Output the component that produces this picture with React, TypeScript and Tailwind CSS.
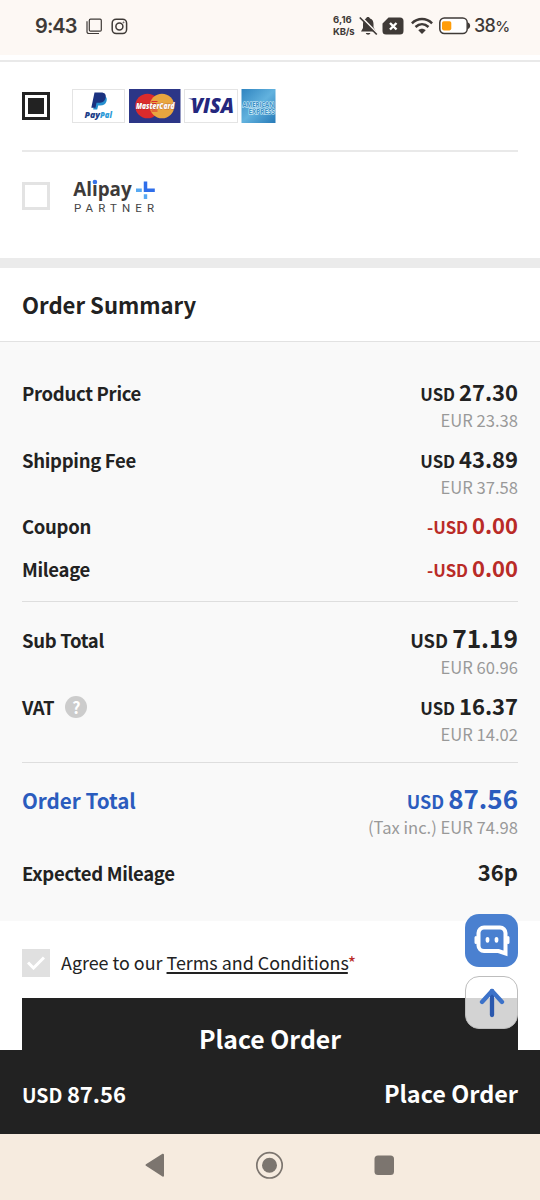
import type { ReactNode } from "react"

type AmountProps = {
  value: string
  sign?: string
  className?: string
  valueClassName?: string
}

type SummaryRowProps = {
  label: ReactNode
  className: string
  labelClassName?: string
  note?: string
  children: ReactNode
}

const Amount = ({
  value,
  sign = "",
  className = "text-[16.8px]",
  valueClassName = "text-[22px]",
}: AmountProps) => (
  <span className={`font-bold ${className}`}>
    {sign}USD <span className={valueClassName}>{value}</span>
  </span>
)

const SummaryRow = ({
  label,
  className,
  labelClassName = "text-[18.5px] tracking-[-0.3px]",
  note,
  children,
}: SummaryRowProps) => (
  <div className={className}>
    <div className="flex h-[30px] items-baseline justify-between whitespace-nowrap leading-[30px]">
      <div className={`font-bold ${labelClassName}`}>{label}</div>
      {children}
    </div>
    {note && (
      <p className="text-right text-[16.6px] leading-[28px] text-[#999]">{note}</p>
    )}
  </div>
)

const StatusBar = () => (
  <header className="flex h-[55px] shrink-0 items-center bg-[#fdf8f4] pr-[31px] pl-[35px] font-['Inter',sans-serif] text-[#3f3a37]">
    <span className="mt-[-3px] w-[42px] text-[20px] font-semibold tracking-[-0.9px] whitespace-nowrap">9:43</span>
    <svg className="mt-[-3px] ml-[9px]" width="17" height="17" viewBox="0 0 17 17" fill="none" stroke="currentColor">
      <rect x="3.3" y="1.2" width="12" height="12" rx="1.2" strokeWidth="1.2" />
      <path d="M1 3.2v10.5a1.8 1.8 0 0 0 1.8 1.8H13" strokeWidth="1.2" />
    </svg>
    <svg className="mt-[-3px] ml-[8px]" width="17" height="17" viewBox="0 0 17 17" fill="none" stroke="currentColor" strokeWidth="1.5">
      <rect x="1.2" y="1.2" width="14.4" height="14.4" rx="4" />
      <circle cx="8.4" cy="8.4" r="3.5" />
      <circle cx="12.5" cy="4.4" r=".5" strokeWidth=".8" />
    </svg>
    <div className="mt-[-4px] ml-auto flex items-center">
      <div className="w-[22px] text-[9.5px] leading-[12px] font-bold whitespace-nowrap">
        <p className="tracking-[0.1px]">6,16</p>
        <p className="tracking-[-0.2px]">KB/s</p>
      </div>
      <svg className="ml-[4px]" width="19" height="20" viewBox="0 0 19 20">
        <path d="M7 2.6C7.2 1.5 8 1 9 1s1.8.5 2 1.6c2.5.9 3.5 2.9 3.5 5.4v3.2L17 15.5H2L4 12V8c0-2.5 1-4.5 3-5.4z" fill="currentColor" />
        <path d="M6.8 17h4.6c-.3 1.1-1.2 1.7-2.3 1.7S7 18 6.8 17z" fill="currentColor" />
        <path d="M1.8.5L19 18" stroke="#fdf8f4" strokeWidth="1.8" />
        <path d="M.8 1.5L17.8 18.5" stroke="currentColor" strokeWidth="1.7" />
      </svg>
      <svg className="ml-[4px]" width="22" height="18" viewBox="0 0 22 18">
        <path d="M6.5.5H18A3.5 3.5 0 0 1 21.5 4v10a3.5 3.5 0 0 1-3.5 3.5H4A3.5 3.5 0 0 1 .5 14V6.5z" fill="currentColor" />
        <path d="M8 6l6.5 6.5M14.5 6L8 12.5" stroke="#fff" strokeWidth="2.4" />
      </svg>
      <svg className="ml-[7px]" width="22" height="18" viewBox="0 0 22 18" fill="none" stroke="currentColor" strokeWidth="2.5">
        <path d="M.9 6.3c5.8-5.6 14.4-5.6 20.2 0" />
        <path d="M4.5 10c3.9-3.6 9.1-3.6 13 0" />
        <path d="M7.3 13.2c2.2-2 5.2-2 7.4 0L11 17z" fill="currentColor" stroke="none" />
      </svg>
      <svg className="ml-[6px]" width="32" height="18" viewBox="0 0 32 18">
        <rect x=".8" y="1" width="27.4" height="15.6" rx="4.5" fill="#fff" stroke="currentColor" strokeWidth="1.5" />
        <rect x="3" y="4.2" width="9.3" height="9.2" rx="1.8" fill="#ff9d0a" />
        <path d="M28.9 5.5c3 .8 3 5.8 0 6.6z" fill="currentColor" />
      </svg>
      <span className="ml-[3px] w-[35px] text-[18px] font-medium tracking-[-0.7px] whitespace-nowrap">
        38<span className="text-[15px]">%</span>
      </span>
    </div>
  </header>
)

const CardLogos = () => (
  <svg className="ml-[22px]" width="204" height="34" viewBox="0 0 204 34" fontFamily="'Open Sans', sans-serif">
    <defs>
      <linearGradient id="amex" x1="0" y1="0" x2="1" y2="1">
        <stop offset="0" stopColor="#2f84c0" />
        <stop offset=".5" stopColor="#62b2de" />
        <stop offset="1" stopColor="#277ab8" />
      </linearGradient>
    </defs>

    <rect x=".5" y=".5" width="52" height="33" fill="#fff" stroke="#e4e4e4" />
    <path d="M23.5 6.5h7c3.5 0 5 2.500 4 5.700-.9 3.200-3 4.300-6.300 4.300h-2l-1 4h-4z" fill="#2790d0" />
    <path d="M22.5 3.5h6.5c4 0 5.3 2.1 4.6 5.3-.8 3.7-3.3 5-6.7 5h-2.4l-1 5h-4.2z" fill="#1b3280" />
    <text x="12.5" y="28.5" fontSize="8.5" fontWeight="800" fontStyle="italic" fill="#1b3d88" textLength="15.5" lengthAdjust="spacingAndGlyphs">Pay</text>
    <text x="28" y="28.5" fontSize="8.5" fontWeight="800" fontStyle="italic" fill="#2c9ad8" textLength="12" lengthAdjust="spacingAndGlyphs">Pal</text>

    <rect x="57" y="0" width="51.5" height="34" fill="#2c3687" />
    <circle cx="75.5" cy="17" r="12.3" fill="#dc2b2c" />
    <circle cx="90" cy="17" r="12.3" fill="#e9a63f" />
    <path d="M79.5 12.5h6M78.5 14.5h6M78 17h6M78.5 20h6M79.5 22h6" stroke="#dc2b2c" strokeWidth="1" />
    <text x="64" y="20" fontSize="8" fontWeight="800" fontStyle="italic" fill="#fff" stroke="#7d1b27" strokeWidth=".4" paintOrder="stroke" textLength="38.5" lengthAdjust="spacingAndGlyphs">MasterCard</text>

    <rect x="112.5" y=".5" width="53" height="33" fill="#fff" stroke="#e4e4e4" />
    <g fill="#24277e">
      <text x="119" y="24.3" fontSize="20.5" fontWeight="800" fontStyle="italic" textLength="43" lengthAdjust="spacingAndGlyphs">VISA</text>
      <path d="M116 9.6h6.5l2 5c-1.5-2.5-3.5-3.5-6.5-4.5z" />
    </g>

    <rect x="169.500" y="0" width="34" height="34" fill="url(#amex)" />
    <g fill="#3b91c7" stroke="#d9f0fa" strokeWidth="1" paintOrder="stroke" fontSize="6.5" fontWeight="700">
      <text x="170.5" y="17.5" textLength="31.5" lengthAdjust="spacingAndGlyphs">AMERICAN</text>
      <text x="176.5" y="24.5" textLength="26.5" lengthAdjust="spacingAndGlyphs">EXPRESS</text>
    </g>
  </svg>
)

const AlipayLogo = () => (
  <svg className="ml-[22px] overflow-visible" width="84" height="38" viewBox="0 0 84 38">
    <text x="1.2" y="19.2" fontFamily="'Open Sans', sans-serif" fontSize="19.5" fontWeight="700" fill="#3d3a39" textLength="58.5" lengthAdjust="spacingAndGlyphs">Alipay</text>
    <circle cx="22.9" cy="5" r="2.3" fill="#3a74e8" />
    <path d="M73.5 4.5v8.8h9.3" fill="none" stroke="#2f6eea" strokeWidth="3.5" />
    <path d="M64 13.3h5.8M73.5 17.3v4.7" stroke="#58a9f2" strokeWidth="3.4" />
    <text x="2" y="35.3" fontFamily="Roboto, sans-serif" fontSize="11.5" fill="#454545" textLength="80">PARTNER</text>
  </svg>
)

const PaymentMethods = () => (
  <section className="h-[198px] shrink-0 border-t-2 border-[#e9e9e9] px-[22px]">
    <div className="flex h-[90px] items-center border-b-2 border-[#e9e9e9]">
      <div className="flex size-7 items-center justify-center border-[3px] border-[#222]">
        <div className="size-4 bg-[#222]" />
      </div>
      <CardLogos />
    </div>
    <div className="flex h-[88px] items-center">
      <div className="size-7 border-[3px] border-[#e3e3e3]" />
      <AlipayLogo />
    </div>
  </section>
)

const OrderSummary = () => (
  <section className="shrink-0">
    <h2 className="flex h-[74px] items-center border-b border-[#e2e2e2] px-[22px] text-[22.1px] font-bold">
      Order Summary
    </h2>
    <div className="h-[579px] bg-[#f9f9f9] px-[22px] pt-[34px]">
      <SummaryRow className="h-[67px]" label="Product Price" note="EUR 23.38">
        <Amount value="27.30" />
      </SummaryRow>
      <SummaryRow className="h-[66px]" label="Shipping Fee" note="EUR 37.58">
        <Amount value="43.89" />
      </SummaryRow>
      <SummaryRow className="h-[43px]" label="Coupon">
        <Amount sign="-" value="0.00" className="text-[16.8px] text-[#b92b27]" />
      </SummaryRow>
      <SummaryRow className="h-[49px]" label="Mileage">
        <Amount sign="-" value="0.00" className="text-[16.8px] text-[#b92b27]" />
      </SummaryRow>

      <div className="h-[162px] border-y border-[#dedede] pt-[21px]">
        <SummaryRow className="h-[67px]" label="Sub Total" note="EUR 60.96">
          <Amount value="71.19" className="text-[18.3px]" valueClassName="text-[24.5px]" />
        </SummaryRow>
        <SummaryRow
          className="h-[67px]"
          label={
            <span className="flex items-center">
              VAT
              <span className="ml-[11px] flex size-[22px] items-center justify-center rounded-full bg-[#ccc] text-[16px] font-bold text-white">
                ?
              </span>
            </span>
          }
          note="EUR 14.02"
        >
          <Amount value="16.37" />
        </SummaryRow>
      </div>

      <SummaryRow
        className="h-[74px] pt-[20px]"
        label="Order Total"
        labelClassName="text-[20.6px] text-[#2b5cbe]"
        note="(Tax inc.) EUR 74.98"
      >
        <Amount value="87.56" className="text-[18px] text-[#2b5cbe]" valueClassName="text-[26px]" />
      </SummaryRow>
      <SummaryRow className="mt-[19px]" label="Expected Mileage">
        <span className="text-[22px] font-bold">36p</span>
      </SummaryRow>
    </div>
  </section>
)

const FloatingButtons = () => (
  <div className="absolute top-[914px] left-[465px] flex flex-col gap-[9px]">
    <button className="flex size-[53px] items-center justify-center rounded-[14px] bg-[#4a80d0]">
      <svg width="36" height="34" viewBox="0 0 36 34" fill="none" stroke="#fff">
        <path d="M10 3.5h16a5.5 5.5 0 0 1 5.5 5.5v20.5l-7-2.5H10A5.5 5.5 0 0 1 4.5 21.5V9A5.5 5.5 0 0 1 10 3.5z" strokeWidth="4" />
        <path d="M2 13.5v5M34 13.5v5" strokeWidth="3" strokeLinecap="round" />
        <path d="M13.5 14.8v2M22.5 14.8v2" strokeWidth="3.7" strokeLinecap="round" />
      </svg>
    </button>
    <button className="flex size-[53px] items-center justify-center rounded-[14px] border border-[#bdbdbd] bg-white/80">
      <svg width="26" height="30" viewBox="0 0 26 30" fill="none" strokeWidth="4.3" strokeLinecap="round" strokeLinejoin="round">
        <path d="M13 27V3" stroke="#2a58ad" />
        <path d="M3 14L13 3l10 11" stroke="#3c72c9" />
      </svg>
    </button>
  </div>
)

const NavigationBar = () => (
  <nav className="flex h-[66px] shrink-0 justify-center bg-[#f6ebdf]">
    <svg width="270" height="62" viewBox="0 0 270 62" fill="#7c756f">
      <path d="M11.5 31L28 20.7v21z" stroke="#7c756f" strokeWidth="2" strokeLinejoin="round" />
      <circle cx="134.5" cy="31.3" r="12.7" fill="none" stroke="#7c756f" strokeWidth="1.7" />
      <circle cx="134.5" cy="31.3" r="7.5" />
      <rect x="239.5" y="21.5" width="19.5" height="19.5" rx="3.5" />
    </svg>
  </nav>
)

export default function App() {
  return (
    <div className="relative flex h-[1200px] w-[540px] flex-col overflow-hidden bg-white font-['Noto_Sans_CJK_KR',sans-serif] text-[#222]">
      <StatusBar />
      <div className="h-[5px] shrink-0" />
      <PaymentMethods />
      <div className="h-[10px] shrink-0 bg-[#ebebeb]" />
      <OrderSummary />
      <section className="h-[129px] shrink-0 px-[22px] pt-[28px]">
        <div className="flex h-[28px] items-center">
          <div className="flex size-7 items-center justify-center bg-[#e0e0e0]">
            <svg width="18" height="14" viewBox="0 0 18 14" fill="none" stroke="#fff" strokeWidth="3">
              <path d="M1 6.5l5.5 5.5L17 1.5" />
            </svg>
          </div>
          <p className="mt-[-2px] ml-[11px] text-[17.9px] whitespace-nowrap">
            Agree to our <a className="underline decoration-[1.5px] underline-offset-2">Terms and Conditions</a>
            <span className="text-[#b92b27]">*</span>
          </p>
        </div>
        <button className="mt-[21px] flex h-[52px] w-full items-end justify-center bg-[#222] pb-[2px] text-[24.8px] leading-[20px] font-bold text-white">
          Place Order
        </button>
      </section>
      <footer className="flex h-[84px] shrink-0 items-center justify-between bg-[#222] px-[22px] pt-[3px] text-white">
        <Amount value="87.56" className="text-[19.5px]" valueClassName="text-[22px]" />
        <span className="text-[23.4px] font-bold">Place Order</span>
      </footer>
      <NavigationBar />
      <FloatingButtons />
    </div>
  )
}
